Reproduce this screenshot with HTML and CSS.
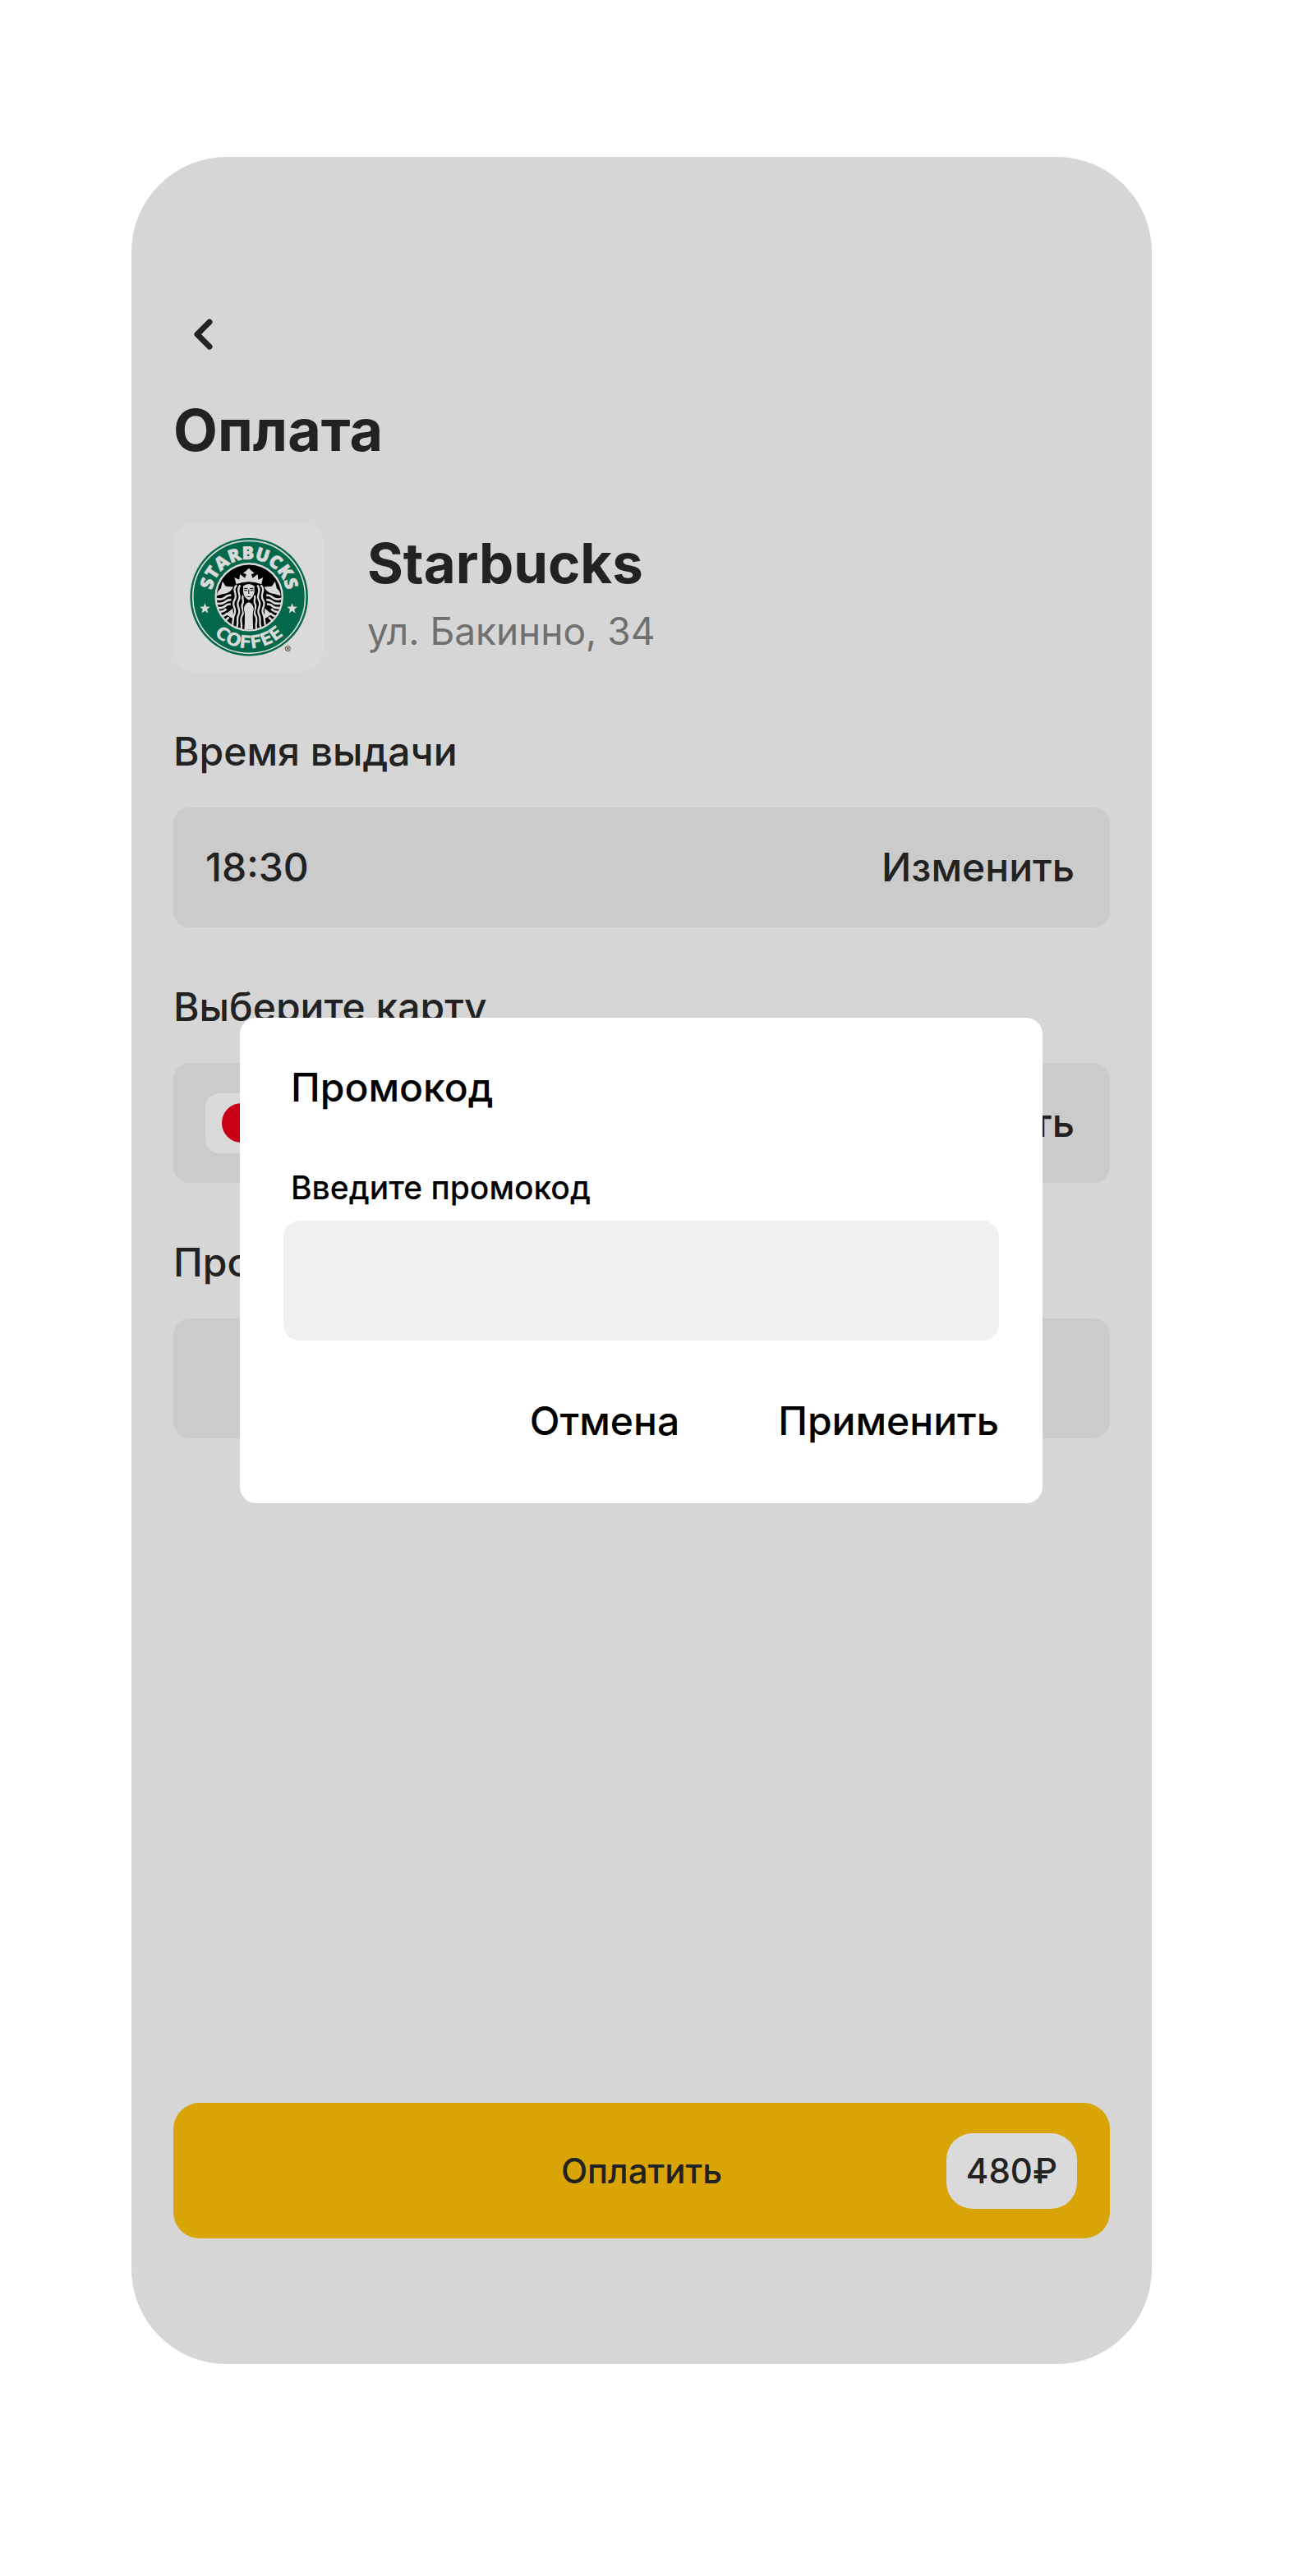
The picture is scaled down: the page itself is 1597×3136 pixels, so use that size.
FILE: index.html
```html
<!DOCTYPE html>
<html lang="ru">
<head>
<meta charset="utf-8">
<meta name="viewport" content="width=device-width, initial-scale=1">
<title>Оплата</title>
<link rel="stylesheet" href="styles.css">
</head>
<body>
<div class="phone">
  <main class="screen">
    <button class="back" type="button" aria-label="Назад">
      <svg viewBox="0 0 72 72" aria-hidden="true"><path d="M44 21 29 36l15 15"/></svg>
    </button>
    <h1 class="title">Оплата</h1>

    <section class="venue">
      <div class="venue-logo">
        <svg viewBox="35 28 548 548" role="img" aria-label="Starbucks Coffee">
          <defs>
            <path id="arc-top" d="M173 303a138 138 0 0 1 276 0"/>
            <path id="arc-bottom" d="M124 303a187 187 0 0 0 374 0"/>
            <clipPath id="medal"><circle cx="311" cy="303" r="119"/></clipPath>
            <g id="siren-side">
              <path class="light" d="M194 298c0-12 8-22 14-26l6-26 12 18 28 2c-8 16-20 22-28 24-10 2-18 4-32 8z"/>
              <path class="wave-light" d="M188 308q22 8 36-4 8-8 22-8M190 325q22 6 36-6 8-6 20-6M194 342q20 4 32-8 8-6 18-5M200 358q18 0 28-12M210 374q14-2 22-13M220 390q10-4 17-14"/>
              <path class="light" d="M226 366l26-22 2 38-12-6z"/>
              <path class="strand" d="M266 260c-20 18 6 34-8 54s10 30 0 50 0 30-12 50M279 260c-18 18 6 36-6 56s10 30 0 50 2 30-8 52M291 296c-10 10 4 18-4 32s10 26-1 42 2 28-4 50"/>
            </g>
          </defs>
          <circle class="green" cx="311" cy="303" r="215"/>
          <circle class="ring" cx="311" cy="303" r="205"/>
          <circle class="light" cx="311" cy="303" r="125"/>
          <circle cx="311" cy="303" r="118"/>
          <g clip-path="url(#medal)">
            <use href="#siren-side"/>
            <use href="#siren-side" transform="translate(620 0) scale(-1 1)"/>
            <path class="body" d="M296 330q14-18 28 0 8 10 4 24t0 70h-36q4-56 0-70t4-24z"/>
            <path class="body" d="M288 262q22-16 44 0v24q-4 22-22 30-18-8-22-30z"/>
            <path class="light" d="M264 256l-6-24 17 8 3-20 18 14 5-14-12-4 11-8 10-10 10 10 11 8-12 4 5 14 18-14 3 20 17-8-6 24q-46-14-92 0z"/>
            <path class="face" d="M268 257q42-17 84 0M293 271l13 1M314 272l13-1M310 276v15M303 300q7 4 14 0M293 279h11M316 279h11"/>
          </g>
          <text class="ring-text"><textPath href="#arc-top" startOffset="50%">STARBUCKS</textPath></text>
          <text class="ring-text ring-text-wide"><textPath href="#arc-bottom" startOffset="50%">COFFEE</textPath></text>
          <path id="star" class="light" d="M150 325l5 13 14 1-11 9 4 14-12-8-12 8 4-14-11-9 14-1z"/>
          <use href="#star" x="318"/>
          <text class="registered" x="452" y="508">®</text>
        </svg>
      </div>
      <div class="venue-info">
        <h2 class="venue-name">Starbucks</h2>
        <p class="venue-address">ул. Бакинно, 34</p>
      </div>
    </section>

    <section class="field">
      <h3 class="field-label">Время выдачи</h3>
      <div class="field-box">
        <span>18:30</span>
        <button class="text-button" type="button">Изменить</button>
      </div>
    </section>

    <section class="field">
      <h3 class="field-label">Выберите карту</h3>
      <div class="field-box">
        <span class="card">
          <svg viewBox="0 0 112 73" role="img" aria-label="Mastercard">
            <circle cx="44" cy="36" r="24" fill="#c90015"/>
            <circle cx="68" cy="36" r="24" fill="#d18b00"/>
          </svg>
        </span>
        <button class="text-button" type="button">Изменить</button>
      </div>
    </section>

    <section class="field">
      <h3 class="field-label">Промокод</h3>
      <div class="field-box"></div>
    </section>

    <button class="pay" type="button">
      <span class="pay-label">Оплатить</span>
      <span class="pay-sum">480₽</span>
    </button>
  </main>

  <div class="overlay">
    <form class="dialog" role="dialog" aria-labelledby="dialog-title">
      <h2 class="dialog-title" id="dialog-title">Промокод</h2>
      <label class="dialog-label" for="promo">Введите промокод</label>
      <input class="dialog-input" id="promo" type="text">
      <div class="dialog-actions">
        <button class="text-button" type="button">Отмена</button>
        <button class="text-button" type="button">Применить</button>
      </div>
    </form>
  </div>
</div>
</body>
</html>
```
FILE: styles.css
```css
* {
  box-sizing: border-box;
}

body {
  display: flex;
  min-height: 100vh;
  margin: 0;
  padding: 191px 195px 258px 160px;
  background: #fff;
  color: #222;
  font-family: Inter, "Liberation Sans", sans-serif;
  font-size: 48px;
  font-weight: 500;
  line-height: 60px;
}

h1,
h2,
h3,
p {
  margin: 0;
  font: inherit;
}

button,
input {
  margin: 0;
  padding: 0;
  border: 0;
  background: none;
  color: inherit;
  font: inherit;
}

button {
  cursor: pointer;
}

.phone {
  position: relative;
  display: flex;
  flex: 1;
  border-radius: 116px;
  background: #d6d6d6;
}

.screen {
  display: flex;
  flex: 1;
  flex-direction: column;
  padding: 180px 51px 153px;
}

.back {
  width: 72px;
  height: 72px;
}

.back svg {
  display: block;
  fill: none;
  stroke: #222;
  stroke-width: 7;
  stroke-linecap: round;
  stroke-linejoin: round;
}

.title,
.venue-name {
  font-weight: 700;
  line-height: 80px;
}

.title {
  margin-top: 41px;
  font-size: 70px;
}

.venue {
  display: flex;
  gap: 53px;
  margin-top: 71px;
}

.venue-logo {
  width: 183px;
  height: 183px;
  border-radius: 28px;
  background: #dadada;
}

.venue-logo svg {
  display: block;
}

.venue-info {
  display: flex;
  flex-direction: column;
  gap: 12px;
  padding-top: 11px;
}

.venue-name {
  font-size: 67px;
}

.venue-address {
  color: #707070;
  font-size: 46px;
  font-weight: 400;
}

.green {
  fill: #03694a;
}

.light {
  fill: #dadada;
}

.ring {
  fill: none;
  stroke: #dadada;
  stroke-width: 5;
}

.wave-light {
  fill: none;
  stroke: #dadada;
  stroke-width: 8;
}

.strand {
  fill: none;
  stroke: #dadada;
  stroke-width: 7;
}

.body {
  fill: #dadada;
  stroke: #000;
  stroke-width: 3;
}

.face {
  fill: none;
  stroke: #000;
  stroke-width: 3;
}

.ring-text {
  fill: #dadada;
  stroke: #dadada;
  stroke-width: 2;
  font-family: "Open Sans", sans-serif;
  font-size: 65px;
  font-weight: 800;
  text-anchor: middle;
}

.ring-text-wide {
  stroke: none;
  font-family: "DejaVu Sans", sans-serif;
  font-weight: 700;
}

.registered {
  fill: #444;
  font-size: 36px;
  text-anchor: middle;
}

.field {
  margin-top: 67px;
}

.field-box {
  display: flex;
  align-items: center;
  justify-content: space-between;
  height: 146px;
  margin-top: 38px;
  padding: 0 43px 0 39px;
  border-radius: 20px;
  background: #cbcbcb;
}

.card {
  width: 112px;
  height: 73px;
  border-radius: 17px;
  background: #dadada;
}

.card svg {
  display: block;
}

.pay {
  display: grid;
  grid-template-columns: 1fr auto 1fr;
  align-items: center;
  height: 165px;
  margin-top: auto;
  padding: 0 40px;
  border-radius: 32px;
  background: #d9a406;
  font-size: 42px;
}

.pay-label {
  grid-column: 2;
}

.pay-sum {
  justify-self: end;
  padding: 16px 24px;
  border-radius: 32px;
  background: #dadada;
}

.overlay {
  position: absolute;
  inset: 0;
  display: flex;
  align-items: center;
  padding: 0 133px 0 132px;
}

.dialog {
  display: flex;
  flex: 1;
  flex-direction: column;
  padding: 55px 53px 70px;
  border-radius: 20px;
  background: #fff;
  color: #000;
}

.dialog-title,
.dialog-label {
  padding: 0 9px;
}

.dialog-label {
  margin-top: 68px;
  font-size: 39px;
  line-height: 48px;
}

.dialog-input {
  width: 100%;
  height: 146px;
  margin-top: 16px;
  padding: 0 40px;
  border-radius: 20px;
  background: #f0f0f0;
}

.dialog-actions {
  display: flex;
  justify-content: flex-end;
  gap: 120px;
  margin-top: 68px;
}
```
